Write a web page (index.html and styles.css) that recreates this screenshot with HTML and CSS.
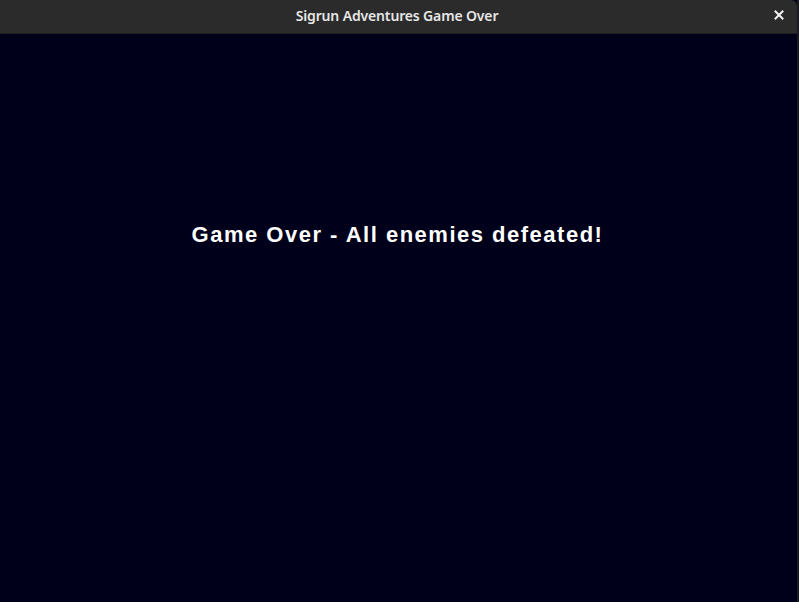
FILE: index.html
```html
<!DOCTYPE html>
<html>
<head>
<meta charset="utf-8">
<link rel="stylesheet" href="styles.css">
</head>
<body>
<div class="desktop">
  <div class="window">
    <header class="titlebar">
      <span class="title">Sigrun Adventures Game Over</span>
      <span class="close">
        <svg width="10" height="10" viewBox="0 0 10 10"><path d="M1.5 1.5 L8.5 8.5 M8.5 1.5 L1.5 8.5" stroke="#f2f2f2" stroke-width="2" stroke-linecap="square"/></svg>
      </span>
    </header>
    <main class="content">
      <h1 class="message">Game Over - All enemies defeated!</h1>
    </main>
  </div>
  <div class="edge"></div>
</div>
</body>
</html>
```
FILE: styles.css
```css
html, body {
  margin: 0;
  padding: 0;
  height: 100%;
  background: #00001a;
  overflow: hidden;
}
.desktop {
  display: flex;
  height: 602px;
  width: 799px;
}
.window {
  flex: 1;
  display: flex;
  flex-direction: column;
}
.titlebar {
  height: 33px;
  background: #2b2b2b;
  border-bottom: 1px solid #1e1e1e;
  border-top-right-radius: 6px;
  display: flex;
  align-items: center;
  justify-content: center;
  position: relative;
}
.title {
  font-family: "Noto Sans", "DejaVu Sans", sans-serif;
  font-size: 14px;
  font-weight: 600;
  color: #e6e6e6;
  letter-spacing: -0.15px;
  margin-left: -3px;
  margin-top: -2px;
}
.close {
  position: absolute;
  right: 13px;
  top: 10px;
  width: 10px;
  height: 10px;
  display: flex;
}
.content {
  flex: 1;
  background: #00001a;
  display: flex;
  justify-content: center;
}
.message {
  margin: 187px 0 0 -2px;
  font-family: "Liberation Sans", Arial, sans-serif;
  font-weight: bold;
  font-size: 22px;
  letter-spacing: 1.5px;
  color: #ffffff;
  line-height: 28px;
}
.edge {
  width: 2px;
  background: #1a1a22;
}
```
